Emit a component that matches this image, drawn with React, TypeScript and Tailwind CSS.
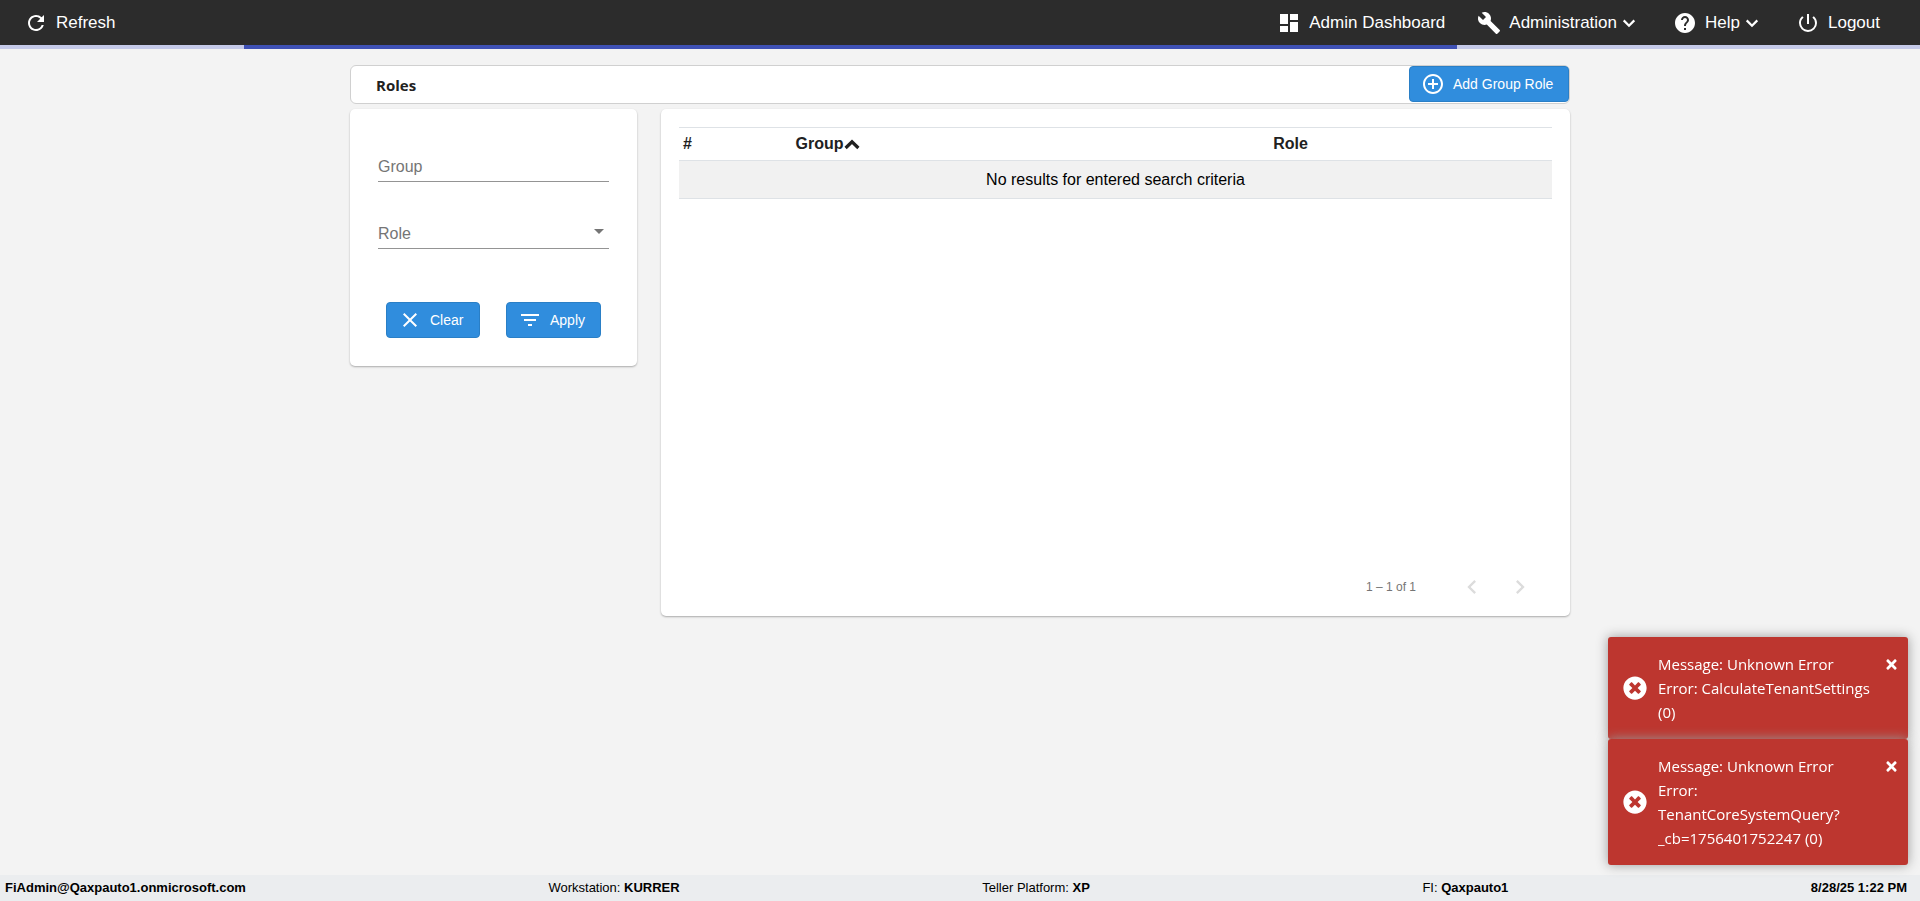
import type { ReactNode } from 'react';
import {
  MdRefresh, MdDashboard, MdBuild, MdHelp, MdPowerSettingsNew,
  MdAddCircleOutline, MdClear, MdFilterList, MdChevronLeft, MdChevronRight, MdArrowDropDown,
} from 'react-icons/md';
import { FaTimes, FaTimesCircle } from 'react-icons/fa';

function MenuChevron() {
  return (
    <svg viewBox="0 0 24 24" className="size-6" fill="none" stroke="currentColor" strokeWidth="2.2" aria-hidden="true">
      <path d="M6.7 9.4l5.3 5.3 5.3-5.3" />
    </svg>
  );
}

function SortArrow() {
  return (
    <svg viewBox="0 0 16 16" className="size-4" fill="none" stroke="currentColor" strokeWidth="3.2" aria-hidden="true">
      <path d="M1.6 12L8 5.8l6.4 6.2" />
    </svg>
  );
}

function NavItem({ icon, label, menu = false }: { icon: ReactNode; label: string; menu?: boolean }) {
  return (
    <button type="button" className="flex items-center text-[17px] leading-6 text-white">
      {icon}
      <span className="ml-2">{label}</span>
      {menu && <MenuChevron />}
    </button>
  );
}

function ActionButton({ icon, label, className }: { icon: ReactNode; label: string; className: string }) {
  return (
    <button
      type="button"
      className={`flex h-9 items-center gap-2 rounded-[4px] border border-[#2a7fc6] bg-[#308ddd] pl-[11px] text-sm text-white ${className}`}
    >
      {icon}
      {label}
    </button>
  );
}

function Toast({ lines }: { lines: string[] }) {
  return (
    <div
      role="alert"
      className="flex items-center rounded-[3px] bg-[#bd362f] py-[15px] pr-[9px] pl-[15px] font-['Open_Sans',sans-serif] text-[15px] leading-6 text-white shadow-[0_0_12px_#999999]"
    >
      <FaTimesCircle className="size-6 shrink-0" />
      <div className="ml-[11px] min-w-0 flex-1 pr-2">
        {lines.map((line) => (
          <p key={line}>{line}</p>
        ))}
      </div>
      <button type="button" aria-label="Close" className="flex h-6 items-center self-start">
        <FaTimes className="size-[15px]" />
      </button>
    </div>
  );
}

export default function App() {
  return (
    <div className="flex min-h-screen flex-col bg-[#f3f3f3] font-['Liberation_Sans',Arial,sans-serif] text-[#212121]">
      <header className="flex min-h-[45px] items-center justify-between bg-[#2c2c2c] pt-2 pr-10 pb-[7px] pl-6">
        <NavItem icon={<MdRefresh className="size-6" />} label="Refresh" />
        <nav className="flex items-center gap-8">
          <NavItem icon={<MdDashboard className="size-6" />} label="Admin Dashboard" />
          <NavItem icon={<MdBuild className="size-6" />} label="Administration" menu />
          <NavItem icon={<MdHelp className="size-6" />} label="Help" menu />
          <NavItem icon={<MdPowerSettingsNew className="size-6" />} label="Logout" />
        </nav>
      </header>
      <div role="progressbar" aria-label="Loading" className="flex h-1 bg-[#c5cae9]">
        <div className="ml-[12.7%] w-[63.2%] bg-[#3f51b5]" />
      </div>

      <main className="mx-auto w-full max-w-[1220px] grow pt-4">
        <div className="flex h-[39px] items-start justify-between rounded-md border border-[#d0d0d0] bg-white pl-[25px]">
          <h1 className="font-['Open_Sans',sans-serif] text-[15px] leading-[39px] font-bold">Roles</h1>
          <ActionButton
            className="w-40"
            icon={<MdAddCircleOutline className="size-6" />}
            label="Add Group Role"
          />
        </div>

        <div className="mt-[5px] flex items-start gap-6">
          <form className="w-[287px] rounded-[5px] bg-white px-7 pt-11 pb-7 shadow-[0_1px_2px_rgba(0,0,0,0.3)]">
            <div className="border-b border-[#949494]">
              <input
                type="text"
                aria-label="Group"
                placeholder="Group"
                className="block h-7 w-full text-base placeholder:text-[#757575] outline-none"
              />
            </div>
            <div className="relative mt-[38px] border-b border-[#949494]">
              <select aria-label="Role" className="block h-7 w-full appearance-none text-base text-[#757575] outline-none">
                <option>Role</option>
              </select>
              <MdArrowDropDown className="pointer-events-none absolute -right-0.5 bottom-[5px] size-6 text-[#757575]" />
            </div>
            <div className="mt-[53px] flex justify-center gap-[26px]">
              <ActionButton className="w-[94px]" icon={<MdClear className="size-6" />} label="Clear" />
              <ActionButton className="w-[95px]" icon={<MdFilterList className="size-6" />} label="Apply" />
            </div>
          </form>

          <section className="flex min-h-[507px] flex-1 flex-col justify-between rounded-[5px] bg-white px-[18px] pt-[18px] pb-[9px] shadow-[0_1px_2px_rgba(0,0,0,0.3)]">
            <table className="w-full table-fixed border-collapse text-left">
              <colgroup>
                <col className="w-[12.9%]" />
                <col className="w-[54.7%]" />
                <col />
              </colgroup>
              <thead>
                <tr className="h-[33px] border-y border-[#dee2e6] font-bold">
                  <th className="px-1">#</th>
                  <th className="px-1">
                    <span className="flex items-center">
                      Group
                      <SortArrow />
                    </span>
                  </th>
                  <th className="px-1">Role</th>
                </tr>
              </thead>
              <tbody>
                <tr className="h-[38px] border-b border-[#dee2e6] bg-[#f1f1f1] text-black">
                  <td colSpan={3} className="text-center">No results for entered search criteria</td>
                </tr>
              </tbody>
            </table>
            <div className="flex items-center justify-end pr-3 text-xs text-[#757575]">
              <span className="mr-9">1 – 1 of 1</span>
              <button type="button" aria-label="Previous page" disabled className="flex size-10 items-center justify-center text-[#dcdcdc]">
                <MdChevronLeft className="size-7" />
              </button>
              <button type="button" aria-label="Next page" disabled className="ml-2 flex size-10 items-center justify-center text-[#dcdcdc]">
                <MdChevronRight className="size-7" />
              </button>
            </div>
          </section>
        </div>
      </main>

      <div className="fixed right-3 bottom-9 w-[300px]">
        <Toast lines={['Message: Unknown Error', 'Error: CalculateTenantSettings (0)']} />
        <Toast lines={['Message: Unknown Error', 'Error: TenantCoreSystemQuery?_cb=1756401752247 (0)']} />
      </div>

      <footer className="flex h-[26px] items-center justify-between bg-[#ebedef] pr-[13px] pl-[5px] text-[13px] text-black">
        <strong>FiAdmin@Qaxpauto1.onmicrosoft.com</strong>
        <span>Workstation: <strong>KURRER</strong></span>
        <span>Teller Platform: <strong>XP</strong></span>
        <span className="pl-[30px]">FI: <strong>Qaxpauto1</strong></span>
        <strong>8/28/25 1:22 PM</strong>
      </footer>
    </div>
  );
}
